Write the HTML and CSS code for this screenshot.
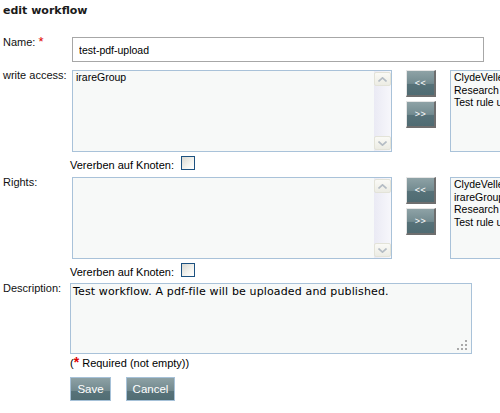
FILE: index.html
```html
<!DOCTYPE html>
<html lang="en">
<head>
<meta charset="utf-8">
<title>edit workflow</title>
<link rel="stylesheet" href="styles.css">
</head>
<body>
<div class="page">
  <h1 class="title">edit workflow</h1>

  <div class="row row-name">
    <label class="lbl">Name: <span class="req">*</span></label>
    <input class="text-in" type="text" value="test-pdf-upload">
  </div>

  <div class="row row-list">
    <label class="lbl">write access:</label>
    <div class="field">
      <div class="list-group">
        <div class="listbox main">
          <div class="opts"><div class="opt">irareGroup</div></div>
          <div class="sbar">
            <div class="sbtn"><svg width="9" height="5" viewBox="0 0 9 5"><polyline points="0.5,4.5 4.5,0.8 8.5,4.5" fill="none" stroke="#b4bcc4" stroke-width="1.6"/></svg></div>
            <div class="strack"></div>
            <div class="sbtn"><svg width="9" height="5" viewBox="0 0 9 5"><polyline points="0.5,0.5 4.5,4.2 8.5,0.5" fill="none" stroke="#b4bcc4" stroke-width="1.6"/></svg></div>
          </div>
        </div>
        <div class="movers">
          <button class="mv" type="button">&lt;&lt;</button>
          <button class="mv" type="button">&gt;&gt;</button>
        </div>
        <div class="listbox side">
          <div class="opts">
            <div class="opt">ClydeVellet</div>
            <div class="opt">Research</div>
            <div class="opt">Test rule user</div>
          </div>
        </div>
      </div>
      <div class="inherit"><span class="inh-text">Vererben auf Knoten:</span><span class="cb"></span></div>
    </div>
  </div>

  <div class="row row-list row-rights">
    <label class="lbl">Rights:</label>
    <div class="field">
      <div class="list-group">
        <div class="listbox main">
          <div class="opts"></div>
          <div class="sbar">
            <div class="sbtn"><svg width="9" height="5" viewBox="0 0 9 5"><polyline points="0.5,4.5 4.5,0.8 8.5,4.5" fill="none" stroke="#b4bcc4" stroke-width="1.6"/></svg></div>
            <div class="strack"></div>
            <div class="sbtn"><svg width="9" height="5" viewBox="0 0 9 5"><polyline points="0.5,0.5 4.5,4.2 8.5,0.5" fill="none" stroke="#b4bcc4" stroke-width="1.6"/></svg></div>
          </div>
        </div>
        <div class="movers">
          <button class="mv" type="button">&lt;&lt;</button>
          <button class="mv" type="button">&gt;&gt;</button>
        </div>
        <div class="listbox side">
          <div class="opts">
            <div class="opt">ClydeVellet</div>
            <div class="opt">irareGroup</div>
            <div class="opt">Research</div>
            <div class="opt">Test rule user</div>
          </div>
        </div>
      </div>
      <div class="inherit"><span class="inh-text">Vererben auf Knoten:</span><span class="cb"></span></div>
    </div>
  </div>

  <div class="row row-desc">
    <label class="lbl">Description:</label>
    <div class="field">
      <div class="desc-wrap">
        <textarea class="desc">Test workflow. A pdf-file will be uploaded and published.</textarea>
        <svg class="grip" width="11" height="11" viewBox="0 0 11 11">
          <rect x="8" y="0" width="2" height="2" fill="#a9a9a9"/>
          <rect x="4" y="4" width="2" height="2" fill="#a9a9a9"/>
          <rect x="8" y="4" width="2" height="2" fill="#a9a9a9"/>
          <rect x="0" y="8" width="2" height="2" fill="#a9a9a9"/>
          <rect x="4" y="8" width="2" height="2" fill="#a9a9a9"/>
          <rect x="8" y="8" width="2" height="2" fill="#a9a9a9"/>
        </svg>
      </div>
      <div class="required">(<span class="req">*</span> Required (not empty))</div>
      <div class="actions">
        <button class="btn btn-save" type="button">Save</button>
        <button class="btn btn-cancel" type="button">Cancel</button>
      </div>
    </div>
  </div>
</div>
</body>
</html>
```

FILE: styles.css
```css
html {
  overflow: hidden;
}

body {
  margin: 0;
  background: #ffffff;
  color: #000000;
  font-family: "Liberation Sans", Arial, sans-serif;
  font-size: 11px;
}

.page {
  width: 620px;
  padding: 4px 0 0 3px;
}

.title {
  margin: 0;
  font-family: "DejaVu Sans", Verdana, sans-serif;
  font-weight: bold;
  font-size: 11px;
  line-height: 13px;
  color: #1a1a1a;
}

.row {
  display: grid;
  grid-template-columns: 67px 1fr;
  align-items: start;
}

.row-name {
  margin-top: 20px;
}

.row-list {
  margin-top: 8px;
}

.row-rights {
  margin-top: 4px;
}

.row-desc {
  margin-top: 3px;
}

.lbl {
  line-height: 11px;
  color: #111;
}

.req {
  color: #e00000;
  font-size: 13px;
  line-height: 10px;
}

.text-in {
  margin: 0 0 0 2px;
  box-sizing: border-box;
  width: 412px;
  height: 25px;
  padding: 0 6px;
  border: 1px solid #a7a7a7;
  background: #ffffff;
  font-family: "Liberation Sans", Arial, sans-serif;
  font-size: 10.5px;
  color: #000;
  outline: none;
}

.field {
  display: flex;
  flex-direction: column;
}

.list-group {
  display: flex;
  align-items: flex-start;
}

.listbox {
  box-sizing: border-box;
  height: 82px;
  border: 1px solid #a9c2d9;
  background: #f7f9f8;
  display: flex;
}

.listbox.main {
  width: 320px;
  margin-left: 2px;
}

.listbox.side {
  width: 60px;
  margin-left: 14px;
}

.opts {
  flex: 1;
  padding: 0 3px;
  overflow: hidden;
  font-family: "Liberation Sans", Arial, sans-serif;
  font-size: 10.5px;
  line-height: 12.7px;
  white-space: nowrap;
}

.sbar {
  width: 17px;
  display: flex;
  flex-direction: column;
  padding: 1px 0 1px 0;
  background: linear-gradient(to right, #eaeaf4, #f7f7fb);
}

.sbtn {
  box-sizing: border-box;
  height: 14px;
  border: 1px solid #e3e3d8;
  border-radius: 2px;
  background: linear-gradient(to bottom, #fafaf6, #ecece4);
  display: flex;
  align-items: center;
  justify-content: center;
}

.strack {
  flex: 1;
}

.movers {
  margin-left: 14px;
  display: flex;
  flex-direction: column;
  gap: 4px;
}

.mv {
  box-sizing: border-box;
  width: 30px;
  height: 27px;
  padding: 0;
  margin: 0;
  border-style: solid;
  border-width: 1px 2px 2px 1px;
  border-color: #e6e6e6 #6e6e6e #6e6e6e #e6e6e6;
  background: linear-gradient(to bottom, #8ea2a6 0%, #738b90 52%, #577279 53%, #4f6b72 100%);
  color: #ffffff;
  font-family: "Liberation Sans", Arial, sans-serif;
  font-size: 9px;
  letter-spacing: 0.5px;
  line-height: 1;
  cursor: pointer;
}

.inherit {
  margin-top: 4px;
  height: 17px;
  display: flex;
  align-items: flex-start;
}

.inh-text {
  padding-top: 3px;
  line-height: 13px;
}

.cb {
  margin-left: 7px;
  box-sizing: border-box;
  width: 14px;
  height: 14px;
  border: 1px solid #1c5180;
  background: linear-gradient(135deg, #d8d8d2 0%, #f4f4f0 60%, #ffffff 100%);
}

.desc-wrap {
  position: relative;
  width: 402px;
  height: 71px;
}

.desc {
  display: block;
  box-sizing: border-box;
  width: 402px;
  height: 71px;
  margin: 0;
  padding: 1px 2px;
  border: 1px solid #a9c2d9;
  background: #f7f9f8;
  resize: none;
  overflow: hidden;
  font-family: "DejaVu Sans", Verdana, sans-serif;
  font-size: 11px;
  letter-spacing: 0.14px;
  line-height: 13px;
  color: #000;
  outline: none;
}

.grip {
  position: absolute;
  right: 4px;
  bottom: 3px;
}

.required {
  margin-top: 3px;
  line-height: 13px;
}

.required .req {
  font-size: 14px;
  font-weight: bold;
}

.actions {
  margin-top: 7px;
  display: flex;
  gap: 15px;
}

.btn {
  box-sizing: border-box;
  height: 24px;
  margin: 0;
  padding: 0;
  border: 1px solid #a6c1d8;
  background: linear-gradient(to bottom, #8da1a5 0%, #72898e 58%, #587379 59%, #516d74 100%);
  color: #ffffff;
  font-family: "Liberation Sans", Arial, sans-serif;
  font-size: 11.5px;
  cursor: pointer;
}

.btn-save {
  width: 41px;
}

.btn-cancel {
  width: 49px;
}
```
